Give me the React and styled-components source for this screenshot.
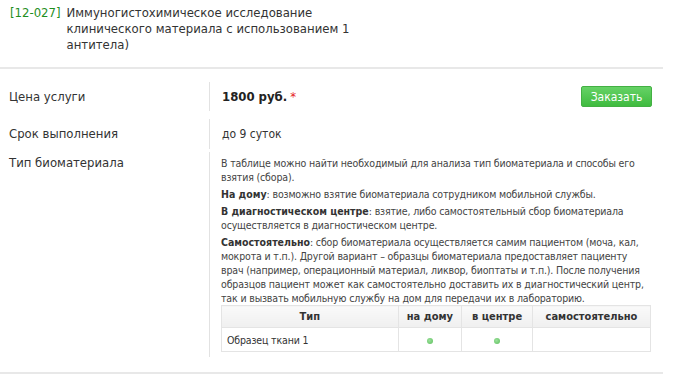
import React from 'react'
import styled, { createGlobalStyle } from 'styled-components'

const GlobalStyle = createGlobalStyle`
  html, body {
    margin: 0;
    padding: 0;
    background: #fff;
  }
  body {
    font-family: "DejaVu Sans Condensed", "DejaVu Sans", sans-serif;
    color: #333;
  }
`

const Page = styled.div`
  width: 663px;
  padding-top: 5px;
`

const TitleRow = styled.div`
  display: flex;
  padding-left: 10px;
  font-size: 13px;
  line-height: 16px;
  color: #333;
`

const Code = styled.span`
  color: #1f8f1f;
  margin-right: 6px;
  white-space: nowrap;
`

const TitleText = styled.h1`
  margin: 0;
  font-size: 13px;
  font-weight: normal;
  line-height: 16px;
  width: 300px;
`

const Divider = styled.div`
  height: 2px;
  background: #e8e8e8;
  margin-top: ${p => p.$top || 0}px;
`

const Rows = styled.div`
  display: flex;
  flex-direction: column;
  padding-top: 13px;
`

const Row = styled.div`
  display: flex;
  align-items: ${p => (p.$top ? 'flex-start' : 'center')};
  margin-top: ${p => p.$gap || 0}px;
`

const Label = styled.div`
  width: 209px;
  flex: none;
  box-sizing: border-box;
  padding-left: 9px;
  padding-top: ${p => (p.$top ? 3 : 0)}px;
  padding-bottom: ${p => p.$lift || 0}px;
  font-size: 13px;
  line-height: 16px;
  color: #333;
`

const Value = styled.div`
  flex: 1;
  display: flex;
  align-items: center;
  justify-content: space-between;
  border-left: 1px solid #e2e2e2;
  padding: ${p => p.$pad || 4}px 11px ${p => p.$pad || 4}px 12px;
  font-size: 12px;
  line-height: 16px;
  color: #333;
`

const Info = styled.div`
  flex: 1;
  border-left: 1px solid #e2e2e2;
  padding: 4px 11px 5px 11px;
  font-size: 10.5px;
  letter-spacing: -0.15px;
  line-height: 14px;
  color: #444;
`

const Price = styled.span`
  font-weight: bold;
  font-size: 13px;
  color: #222;
`

const Star = styled.span`
  color: #e52222;
  margin-left: 3px;
  font-size: 13px;
`

const OrderButton = styled.button`
  width: 71px;
  height: 21px;
  border: 1px solid #43b043;
  border-radius: 2px;
  background: linear-gradient(#66d266, #3fbb3f);
  color: #fff;
  font-family: inherit;
  font-size: 12px;
  padding: 0;
  cursor: pointer;
`

const Para = styled.p`
  margin: 0 0 3px;
  &:last-of-type {
    margin-bottom: 0;
  }
`

const Term = styled.b`
  font-weight: bold;
  letter-spacing: 0;
  color: #333;
`

const Table = styled.table`
  border-collapse: collapse;
  width: 430px;
  margin-top: 0;
  color: #333;
`

const Th = styled.th`
  height: 21px;
  padding: 0 6px;
  border: 1px solid #e4e4e4;
  background: linear-gradient(#fafafa, #efefef);
  font-size: 11px;
  letter-spacing: 0;
  font-weight: bold;
  text-align: center;
  width: ${p => p.$w}px;
`

const Td = styled.td`
  height: 23px;
  padding: 0 5px;
  border: 1px solid #e4e4e4;
  text-align: ${p => (p.$left ? 'left' : 'center')};
`

const Dot = styled.span`
  display: inline-block;
  width: 6px;
  height: 6px;
  border-radius: 50%;
  background: radial-gradient(circle at 40% 40%, #9be09b, #5cbf5c);
  vertical-align: middle;
`

const types = [
  { name: 'Образец ткани 1', home: true, center: true, self: false },
]

export default function App() {
  return (
    <Page>
      <GlobalStyle />
      <TitleRow>
        <Code>[12-027]</Code>
        <TitleText>
          Иммуногистохимическое исследование клинического материала с использованием 1 антитела)
        </TitleText>
      </TitleRow>
      <Divider $top={14} />
      <Rows>
        <Row>
          <Label>Цена услуги</Label>
          <Value>
            <span>
              <Price>1800 руб.</Price>
              <Star>*</Star>
            </span>
            <OrderButton>Заказать</OrderButton>
          </Value>
        </Row>
        <Row $gap={8}>
          <Label $lift={1}>Срок выполнения</Label>
          <Value $pad={7}>до 9 суток</Value>
        </Row>
        <Row $top $gap={3}>
          <Label $top>Тип биоматериала</Label>
          <Info>
            <Para>В таблице можно найти необходимый для анализа тип биоматериала и способы его взятия (сбора).</Para>
            <Para><Term>На дому</Term>: возможно взятие биоматериала сотрудником мобильной службы.</Para>
            <Para><Term>В диагностическом центре</Term>: взятие, либо самостоятельный сбор биоматериала осуществляется в диагностическом центре.</Para>
            <Para>
              <Term>Самостоятельно</Term>: сбор биоматериала осуществляется самим пациентом (моча, кал, мокрота и т.п.). Другой вариант – образцы биоматериала предоставляет пациенту врач (например, операционный материал, ликвор, биоптаты и т.п.). После получения образцов пациент может как самостоятельно доставить их в диагностический центр, так и вызвать мобильную службу на дом для передачи их в лабораторию.
            </Para>
            <Table>
              <thead>
                <tr>
                  <Th $w={201}>Тип</Th>
                  <Th $w={57}>на дому</Th>
                  <Th $w={63}>в центре</Th>
                  <Th $w={109}>самостоятельно</Th>
                </tr>
              </thead>
              <tbody>
                {types.map(t => (
                  <tr key={t.name}>
                    <Td $left>{t.name}</Td>
                    <Td>{t.home && <Dot />}</Td>
                    <Td>{t.center && <Dot />}</Td>
                    <Td>{t.self && <Dot />}</Td>
                  </tr>
                ))}
              </tbody>
            </Table>
          </Info>
        </Row>
      </Rows>
      <Divider $top={15} />
    </Page>
  )
}
